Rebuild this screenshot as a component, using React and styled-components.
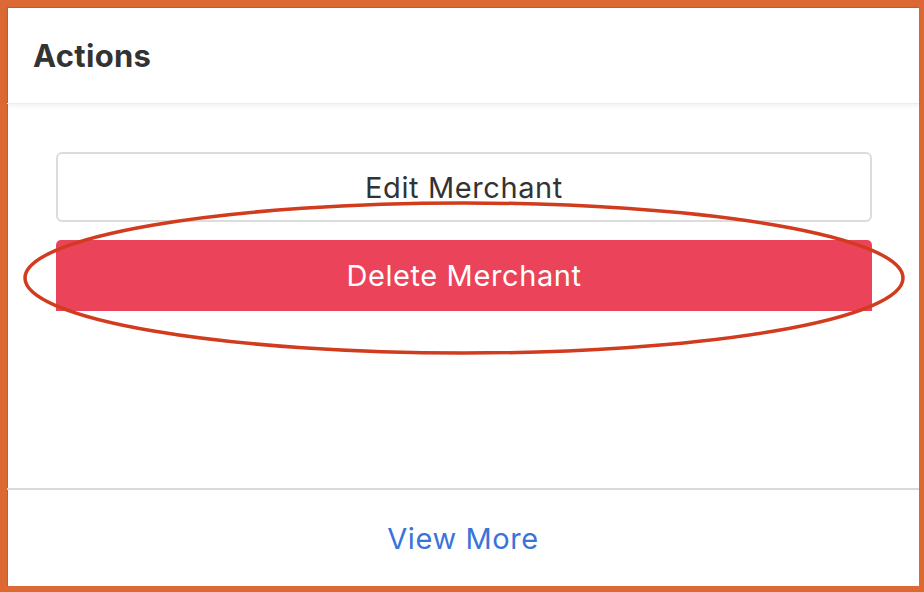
import React from "react";
import styled, { createGlobalStyle } from "styled-components";

const Global = createGlobalStyle`
  html, body { margin: 0; padding: 0; background: #dc6934; }
  body { font-family: Inter, "Noto Sans", "Liberation Sans", sans-serif; }
  * { box-sizing: border-box; }
`;

const Frame = styled.div`
  position: relative;
  width: 924px;
  height: 592px;
  border-style: solid;
  border-color: #dc6934;
  border-width: 7px 5px 6px 7px;
  background: #fff;
  display: flex;
  flex-direction: column;
  box-shadow: inset 1px 1px 0 #c9592a;
`;

const Header = styled.div`
  height: 97px;
  flex: none;
  display: flex;
  align-items: center;
  padding-left: 26px;
  border-bottom: 1px solid #ececec;
  box-shadow: 0 2px 4px rgba(0, 0, 0, 0.06);
  position: relative;
  z-index: 1;
`;

const Title = styled.h2`
  margin: 0;
  font-size: 31px;
  font-weight: 700;
  color: #333;
  letter-spacing: 0.3px;
`;

const Body = styled.div`
  flex: 1;
  display: flex;
  flex-direction: column;
  gap: 18px;
  padding: 48px 47px 0 49px;
  position: relative;
`;

const Button = styled.button`
  width: 100%;
  height: ${(p) => (p.$danger ? "71px" : "70px")};
  font-family: inherit;
  font-size: 29px;
  letter-spacing: 0.6px;
  font-weight: 400;
  display: flex;
  align-items: center;
  justify-content: center;
  padding: 0;
  cursor: pointer;
  color: ${(p) => (p.$danger ? "#fff" : "#333")};
  background: ${(p) => (p.$danger ? "#eb4359" : "#fff")};
  border: ${(p) => (p.$danger ? "none" : "2px solid #dcdcdc")};
  border-radius: ${(p) => (p.$danger ? "5px 5px 0 0" : "6px")};
`;

const Footer = styled.div`
  height: 98px;
  flex: none;
  border-top: 2px solid #d9d9d9;
  display: flex;
  align-items: center;
  justify-content: center;
`;

const Link = styled.a`
  font-size: 29px;
  letter-spacing: 0.6px;
  color: #3a74d8;
  text-decoration: none;
  cursor: pointer;
`;

const Annotation = styled.svg`
  position: absolute;
  pointer-events: none;
  overflow: visible;
`;

export default function App() {
  return (
    <>
      <Global />
      <Frame>
        <Header>
          <Title>Actions</Title>
        </Header>
        <Body>
          <Button>Edit Merchant</Button>
          <Button $danger>Delete Merchant</Button>
        </Body>
        <Footer>
          <Link>View More</Link>
        </Footer>
        <Annotation width="912" height="579" viewBox="0 0 912 579" style={{ left: -7, top: -7 }}>
          <ellipse cx="464" cy="278" rx="439" ry="75" fill="none" stroke="#d13b1e" strokeWidth="3.5" />
        </Annotation>
      </Frame>
    </>
  );
}
